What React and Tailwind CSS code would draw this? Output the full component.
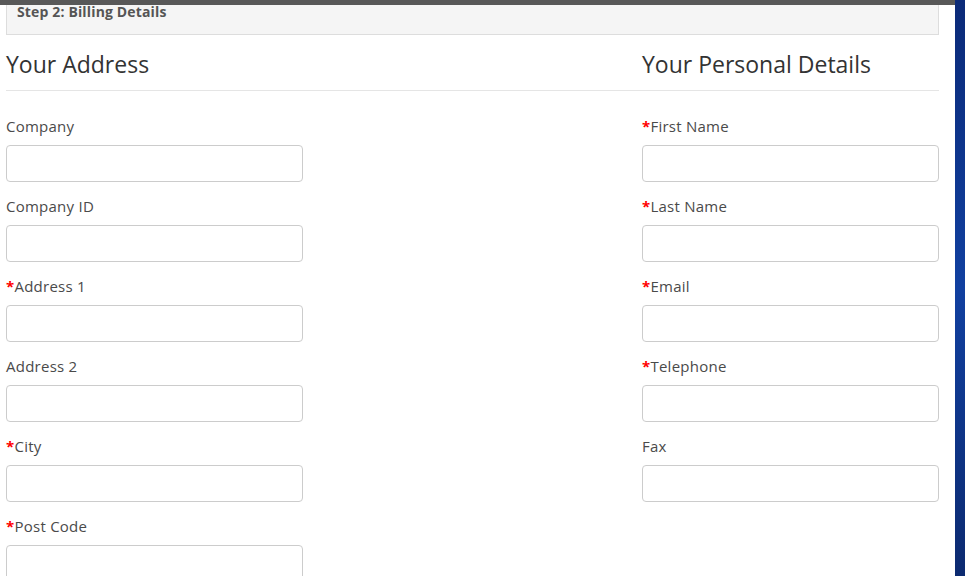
import React from 'react';

const leftFields = [
  { label: 'Company' },
  { label: 'Company ID' },
  { label: 'Address 1', required: true },
  { label: 'Address 2' },
  { label: 'City', required: true },
  { label: 'Post Code', required: true },
];

const rightFields = [
  { label: 'First Name', required: true },
  { label: 'Last Name', required: true },
  { label: 'Email', required: true },
  { label: 'Telephone', required: true },
  { label: 'Fax' },
];

function Field({ label, required }) {
  return (
    <div className="h-[80px] pt-[25px]">
      <label className="block text-[15px] leading-[20px] tracking-[0.25px] text-[#4a4a4a]">
        {required && <span className="text-[#f00] font-bold">*</span>}
        {label}
      </label>
      <input
        type="text"
        className="mt-[9px] block w-[297px] h-[37px] rounded-[4px] border border-[#ccc] bg-white"
      />
    </div>
  );
}

export default function App() {
  return (
    <div className="relative w-[965px] h-[576px] overflow-hidden flex bg-white font-['Open_Sans',sans-serif]">
      {/* fixed top bar over the page */}
      <div className="absolute top-0 left-0 w-[955px] h-[5px] bg-[#585858] z-10" />

      <div className="w-[955px] bg-white px-[6px]">
        {/* panel heading */}
        <div className="w-[933px] h-[35px] bg-[#f5f5f5] border-x border-b border-[#ddd] pl-[10px] pt-[3px]">
          <h4 className="text-[14px] leading-[18px] font-bold tracking-[0.15px] text-[#555]">Step 2: Billing Details</h4>
        </div>

        <div className="flex w-[933px]">
          <div className="w-[636px]">
            <h2 className="text-[23px] leading-[30px] text-[#333] pt-[14px] pb-[11px]">Your Address</h2>
          </div>
          <div className="w-[297px]">
            <h2 className="text-[23px] leading-[30px] text-[#333] pt-[14px] pb-[11px]">Your Personal Details</h2>
          </div>
        </div>
        <div className="w-[933px] border-t border-[#e5e5e5]" />

        <div className="flex w-[933px]">
          <div className="w-[636px]">
            {leftFields.map((f) => (
              <Field key={f.label} {...f} />
            ))}
          </div>
          <div className="w-[297px]">
            {rightFields.map((f) => (
              <Field key={f.label} {...f} />
            ))}
          </div>
        </div>
      </div>

      {/* blue desktop background at the right edge */}
      <div className="w-[10px] h-full bg-gradient-to-b from-[#0b2a78] via-[#1140a0] to-[#0c2a70]" />
    </div>
  );
}
